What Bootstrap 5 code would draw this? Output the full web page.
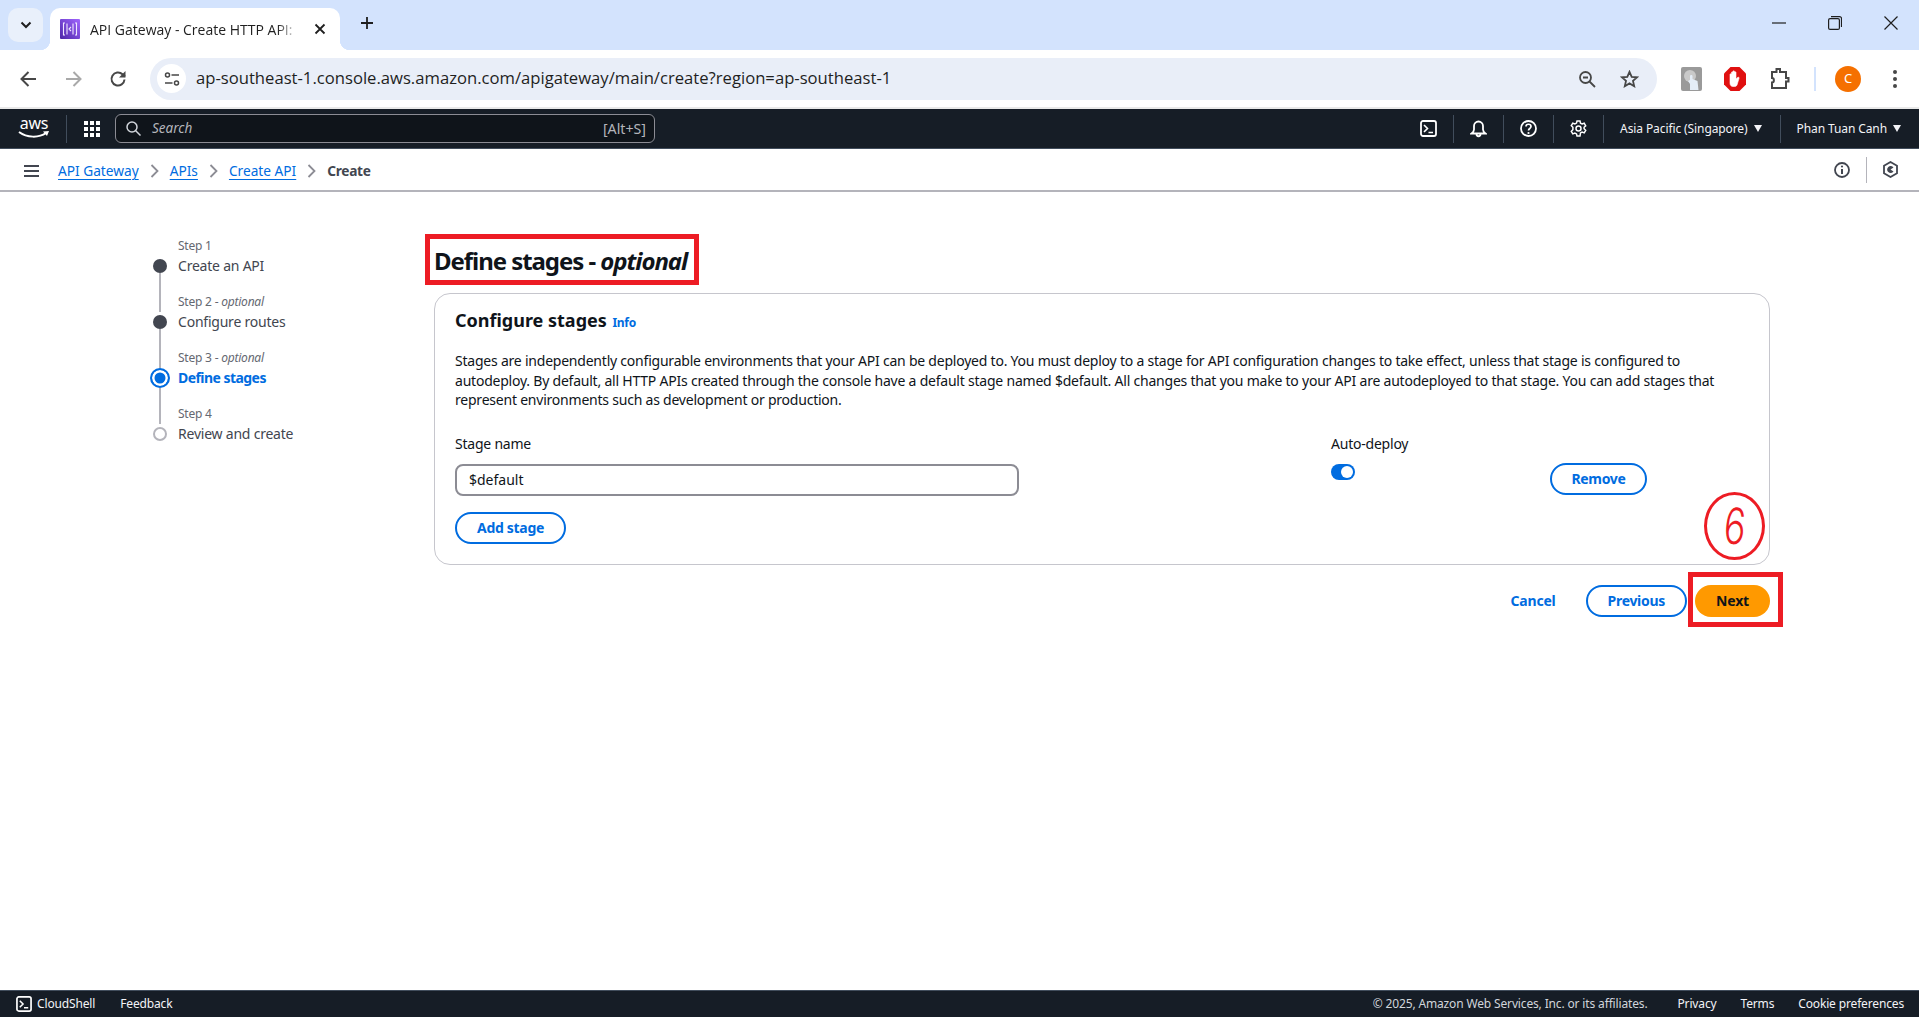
<!DOCTYPE html>
<html lang="en">
<head>
  <meta charset="UTF-8" />
  <meta name="viewport" content="width=device-width, initial-scale=1.0" />
  <title>API Gateway - Create HTTP API</title>
  <link href="https://cdn.jsdelivr.net/npm/bootstrap@5.3.2/dist/css/bootstrap.min.css" rel="stylesheet" />
  <style>
    html, body { height: 100%; }
    body { font-family: "Noto Sans", "Liberation Sans", sans-serif; font-size: 14px; letter-spacing: -.22px; color: #0f141a; background: #fff; overflow: hidden; }
    svg { display: block; flex: none; }

    /* browser chrome */
    .tab-strip { height: 50px; background: #d3e3fd; padding-left: 8px; position: relative; letter-spacing: 0; }
    .tab-list-btn { width: 35px; height: 34px; margin-top: 8px; border-radius: 10px; background: #e9f0fb; }
    .tab-item { width: 290px; height: 42px; margin: 8px 0 0 7px; background: #fff; border-radius: 10px 10px 0 0; padding: 0 14px 0 10px; position: relative; }
    .tab-item::before, .tab-item::after { content: ""; position: absolute; bottom: 0; width: 10px; height: 10px; }
    .tab-item::before { left: -10px; background: radial-gradient(circle at 0 0, #d3e3fd 10px, #fff 10.5px); }
    .tab-item::after { right: -10px; background: radial-gradient(circle at 100% 0, #d3e3fd 10px, #fff 10.5px); }
    .tab-title { width: 208px; margin-left: 10px; font-family: "Open Sans", sans-serif; font-size: 14px; color: #1f1f1f; white-space: nowrap; -webkit-mask-image: linear-gradient(to right, #000 90%, transparent); mask-image: linear-gradient(to right, #000 90%, transparent); }
    .tab-plus { margin-left: 20px; }
    .win-btns { margin-left: auto; padding-right: 21px; gap: 42px; }
    .tool-bar { height: 57px; background: #fff; border-radius: 10px 10px 0 0; padding-left: 19px; letter-spacing: 0; }
    .tool-gap { gap: 26px; }
    .url-bar { width: 1507px; height: 42px; margin-left: 23px; border-radius: 21px; background: #e9eef8; padding: 0 18px 0 7px; }
    .site-btn { width: 29px; height: 29px; border-radius: 50%; background: #fff; }
    .url-text { margin-left: 10px; font-family: "Open Sans", sans-serif; font-size: 16.65px; color: #1f1f1f; white-space: nowrap; }
    .url-end { margin-left: auto; gap: 24px; }
    .ext-icons { margin-left: 24px; }
    .ext-photo { margin-right: 19px; }
    .ext-stop { margin-left: 3px; }
    .puzzle-icon { margin-left: 24px; }
    .ext-sep { width: 2px; height: 24px; background: #d3e3fd; margin: 0 19px 0 24px; }
    .avatar { width: 26px; height: 26px; border-radius: 50%; background: #f57000; color: #fff; font-size: 13px; margin-right: 32px; }
    .chrome-line { height: 2px; background: #e9e9e9; }

    /* aws top nav */
    .aws-nav { height: 40px; background: #161d26; color: #fff; padding-left: 18px; border-bottom: 1px solid #414d5c; letter-spacing: 0; }
    .aws-mark { width: 32px; height: 28px; position: relative; }
    .aws-word { font-size: 16px; line-height: 16px; color: #fff; text-align: center; letter-spacing: -.3px; }
    .aws-smile { margin-top: -1px; }
    .nav-sep { width: 1px; height: 28px; background: #414d5c; }
    .nav-grid { margin: 0 15px 0 17px; }
    .search-box { width: 540px; height: 29px; background: #0f141a; border: 1.5px solid #8c8c94; border-radius: 6px; padding: 0 8px 0 10px; color: #b4b4bb; font-size: 13.5px; }
    .search-word { font-style: italic; margin-left: 11px; }
    .search-key { margin-left: auto; font-size: 14.2px; }
    .nav-right { margin-left: auto; }
    .nav-cell { height: 28px; padding: 0 16px; }
    .nav-cell-wide { padding-right: 18px; }
    .nav-label { font-size: 12px; letter-spacing: -.1px; color: #f3f3f7; white-space: nowrap; }
    .nav-caret { width: 0; height: 0; border-left: 4.5px solid transparent; border-right: 4.5px solid transparent; border-top: 7px solid #f3f3f7; margin-left: 6px; }

    /* breadcrumb bar */
    .crumb-bar { height: 43px; border-bottom: 2px solid #b4b4bb; padding: 3px 21px 0 24px; }
    .crumb-trail { margin-left: 19px; gap: 11px; font-size: 13.7px; letter-spacing: 0; }
    .crumb-trail a { color: #006ce0; text-underline-offset: 3px; }
    .crumb-here { color: #424650; font-weight: 700; letter-spacing: -.3px; }
    .crumb-tools { margin-left: auto; margin-top: -3px; }
    .crumb-sep { width: 1px; height: 26px; background: #b4b4bb; margin: 0 16px; }

    /* main */
    .page-main { padding: 44px 0 0 150px; }
    .step-col { width: 275px; }
    .step-item { display: grid; grid-template-columns: 20px 1fr; column-gap: 8px; grid-template-rows: 20px 36px; }
    .step-rail { display: flex; flex-direction: column; align-items: center; }
    .rail-line { width: 2px; flex: 1; background: #b4b4bb; }
    .step-dot { width: 14px; height: 14px; border-radius: 50%; background: #424650; flex: none; margin-top: 3px; }
    .step-dot.is-now { width: 20px; height: 20px; margin-top: 0; background: #006ce0; border: 2px solid #006ce0; box-shadow: inset 0 0 0 2.5px #fff; }
    .step-dot.is-todo { background: #fff; border: 2px solid #b4b4bb; }
    .step-tag { font-size: 12px; line-height: 20px; color: #656871; }
    .step-name { font-size: 14px; line-height: 20px; color: #424650; }
    .step-name.is-now { color: #006ce0; font-weight: 700; letter-spacing: -.55px; }

    .content-col { width: 1345px; }
    .title-frame { display: inline-block; border: 5px solid #ed1c24; padding: 6px 7px 4px 4px; font-size: 24px; line-height: 31px; font-weight: 700; letter-spacing: -1.05px; margin: -2px 0 8px; }
    .stage-card { margin-left: 9px; border: 1px solid #c6c6cd; border-radius: 16px; padding: 15px 20px 20px; position: relative; }
    .card-heading { font-size: 18px; line-height: 22px; font-weight: 700; letter-spacing: 0; margin: 0; }
    .info-link { font-size: 12px; font-weight: 700; letter-spacing: -.3px; color: #006ce0; margin-left: 1px; text-decoration: none; }
    .card-copy { line-height: 19.6px; margin: 17px 0 24px; }
    .stage-grid { display: grid; grid-template-columns: 876px 219px 97px; }
    .field-label { line-height: 20px; margin-bottom: 10px; }
    .stage-input { width: 564px; height: 32px; border: 2px solid #8c8c94; border-radius: 8px; padding: 0 12px; font-size: 14px; color: #0f141a; }
    .toggle-track { width: 24px; height: 16px; border-radius: 8px; background: #006ce0; padding: 2px; margin-top: 1px; }
    .toggle-knob { width: 12px; height: 12px; border-radius: 50%; background: #fff; margin-left: auto; }
    .pill-btn { height: 32px; padding: 0 20px; border: 2px solid #006ce0; border-radius: 20px; background: #fff; color: #006ce0; font-size: 14px; font-weight: 700; letter-spacing: -.3px; line-height: 1; }
    .remove-cell { margin-top: 29px; }
    .add-btn { margin-top: 16px; }
    .form-actions { margin-top: 20px; gap: 8px; }
    .cancel-link { color: #006ce0; font-weight: 700; letter-spacing: -.2px; text-decoration: none; margin-right: 22px; }
    .next-wrap { position: relative; }
    .next-btn { height: 32px; width: 75px; border: 0; border-radius: 20px; background: #ff9900; color: #0f141a; font-size: 14px; font-weight: 700; letter-spacing: -.2px; }
    .next-wrap::after { content: ""; position: absolute; top: -13px; bottom: -10px; left: -7px; right: -13px; border: 5px solid #ed1c24; pointer-events: none; }
    .mark-six { position: absolute; left: 1269px; top: 198px; width: 61px; height: 68px; border: 3px solid #ed1c24; border-radius: 50%; color: #ed1c24; font-family: "Inter", sans-serif; font-weight: 300; font-size: 50px; line-height: 1; }
    .six-glyph { display: block; transform: scaleX(.72) skewX(-6deg); }

    /* footer */
    .aws-foot { height: 27px; background: #161d26; color: #f3f3f7; font-size: 12px; letter-spacing: -.15px; padding: 0 15px 0 16px; border-top: 1px solid #414d5c; }
    .foot-copy { margin-left: auto; color: #d1d5db; }
    .foot-shell { margin-right: 25px; gap: 5px; }
    .foot-links { gap: 24px; margin-left: 30px; }
  </style>
</head>
<body class="d-flex flex-column">

  <!-- browser tabs -->
  <div class="tab-strip d-flex align-items-start">
    <div class="tab-list-btn d-flex align-items-center justify-content-center">
      <svg width="12" height="8" viewBox="0 0 12 8"><path d="M1.5 1.5 6 6l4.500-4.500" fill="none" stroke="#1f1f1f" stroke-width="2"/></svg>
    </div>
    <div class="tab-item d-flex align-items-center">
      <svg width="20" height="20" viewBox="0 0 20 20"><defs><linearGradient id="favBg" x1="0" y1="1" x2="1" y2="0"><stop offset="0" stop-color="#4d27a8"/><stop offset="1" stop-color="#a166ff"/></linearGradient></defs><rect width="20" height="20" rx="1" fill="url(#favBg)"/><path d="M5 4H3.500v12H5M15 4h1.500v12H15M7 4.500v11M13 4.500v11M11 8l-2 2 2 2" fill="none" stroke="#f0e8ff" stroke-width="1.100"/></svg>
      <div class="tab-title">API Gateway - Create HTTP API:</div>
      <svg class="ms-auto" width="12" height="12" viewBox="0 0 12 12"><path d="M1.500 1.500l9 9M10.500 1.500l-9 9" stroke="#1f1f1f" stroke-width="1.800"/></svg>
    </div>
    <svg class="tab-plus mt-3" width="14" height="14" viewBox="0 0 14 14"><path d="M7 1v12M1 7h12" stroke="#1f1f1f" stroke-width="1.800"/></svg>
    <div class="win-btns d-flex align-items-center mt-3">
      <svg width="14" height="14" viewBox="0 0 14 14"><path d="M0 7h14" stroke="#1f1f1f" stroke-width="1.200"/></svg>
      <svg width="14" height="14" viewBox="0 0 14 14"><rect x=".6" y="2.600" width="10.800" height="10.800" rx="1.500" fill="none" stroke="#1f1f1f" stroke-width="1.200"/><path d="M3 .6h8.500a2 2 0 0 1 2 2V11" fill="none" stroke="#1f1f1f" stroke-width="1.200"/></svg>
      <svg width="14" height="14" viewBox="0 0 14 14"><path d="M.5.500l13 13M13.500.500l-13 13" stroke="#1f1f1f" stroke-width="1.200"/></svg>
    </div>
  </div>

  <!-- browser toolbar -->
  <div class="tool-bar d-flex align-items-center">
    <div class="tool-gap d-flex align-items-center">
      <svg width="19" height="18" viewBox="0 0 19 18"><path d="M17 9H3M9.500 2 2.500 9l7 7" fill="none" stroke="#474747" stroke-width="2"/></svg>
      <svg width="19" height="18" viewBox="0 0 19 18"><path d="M2 9h14M9.500 2l7 7-7 7" fill="none" stroke="#a9a9a9" stroke-width="2"/></svg>
      <svg width="18" height="18" viewBox="0 0 18 18"><path d="M15.500 9.500a6.500 6.500 0 1 1-2-5.200L16 6.500" fill="none" stroke="#474747" stroke-width="2"/><path d="M16.500 1v6.500H10z" fill="#474747"/></svg>
    </div>
    <div class="url-bar d-flex align-items-center">
      <div class="site-btn d-flex align-items-center justify-content-center">
        <svg width="16" height="16" viewBox="0 0 16 16"><circle cx="3.500" cy="4" r="2" fill="none" stroke="#474747" stroke-width="1.500"/><path d="M7.500 4H15M1 12h7.500" stroke="#474747" stroke-width="1.500"/><circle cx="12.500" cy="12" r="2" fill="none" stroke="#474747" stroke-width="1.500"/></svg>
      </div>
      <div class="url-text">ap-southeast-1.console.aws.amazon.com/apigateway/main/create?region=ap-southeast-1</div>
      <div class="url-end d-flex align-items-center">
        <svg width="18" height="18" viewBox="0 0 18 18"><circle cx="7.500" cy="7.500" r="5.500" fill="none" stroke="#474747" stroke-width="1.800"/><path d="M5 7.500h5M11.500 11.500 17 17" stroke="#474747" stroke-width="1.800"/></svg>
        <svg width="19" height="18" viewBox="0 0 19 18"><path d="m9.500 1.800 2.200 5 5.400.5-4.100 3.600 1.200 5.300-4.700-2.800-4.700 2.800 1.200-5.300L1.900 7.300l5.400-.5z" fill="none" stroke="#474747" stroke-width="1.800"/></svg>
      </div>
    </div>
    <div class="ext-icons d-flex align-items-center">
      <svg class="ext-photo" width="21" height="24" viewBox="0 0 21 24"><rect width="21" height="24" rx="2" fill="#9a9a9a"/><circle cx="9" cy="9" r="6" fill="#c9c9c9"/><path d="M9 23v-6L7 14l2-1V9c0-1.500 2.500-1.500 2.500 0v3l5 2 1 9z" fill="#e4edf7"/></svg>
      <svg class="ext-stop" width="22" height="24" viewBox="0 0 22 24"><path d="M6.500 0h9L22 6.500v11L15.500 24h-9L0 17.500v-11z" fill="#e01010"/><path d="M6 13V7.500c0-1 1.500-1 1.500 0V11V5.500c0-1 1.500-1 1.500 0V11V4.500c0-1 1.500-1 1.500 0V11V5.500c0-1 1.500-1 1.500 0V12l1.500-1.500c1-.8 2 0 1.500 1L13 18c-.500 1-1.500 1.500-2.500 1.500H9C7 19.500 6 18 6 16z" fill="#fff" stroke="#fff" stroke-width=".6"/></svg>
      <svg class="puzzle-icon" width="20" height="23" viewBox="0 0 20 23"><path d="M2 5h4.500V2h3.500v3H16v6h2.500v3.500H16V21H2v-5.500c2.500 0 2.500-4.500 0-4.500z" fill="none" stroke="#474747" stroke-width="2"/></svg>
    </div>
    <div class="ext-sep"></div>
    <div class="avatar d-flex align-items-center justify-content-center">C</div>
    <svg width="4" height="20" viewBox="0 0 4 20"><circle cx="2" cy="3" r="2" fill="#474747"/><circle cx="2" cy="10" r="2" fill="#474747"/><circle cx="2" cy="17" r="2" fill="#474747"/></svg>
  </div>
  <div class="chrome-line"></div>

  <!-- aws console header -->
  <div class="aws-nav d-flex align-items-center">
    <div class="aws-mark">
      <div class="aws-word">aws</div>
      <svg class="aws-smile" width="32" height="10" viewBox="0 0 32 10"><path d="M1 2c8 6 20 6 27 1" fill="none" stroke="#fff" stroke-width="2"/><path d="M25 1.500 31 1l-2 5z" fill="#fff"/></svg>
    </div>
    <div class="nav-sep ms-3"></div>
    <svg class="nav-grid" width="16" height="16" viewBox="0 0 16 16" fill="#fff"><rect width="4" height="4"/><rect x="6" width="4" height="4"/><rect x="12" width="4" height="4"/><rect y="6" width="4" height="4"/><rect x="6" y="6" width="4" height="4"/><rect x="12" y="6" width="4" height="4"/><rect y="12" width="4" height="4"/><rect x="6" y="12" width="4" height="4"/><rect x="12" y="12" width="4" height="4"/></svg>
    <div class="search-box d-flex align-items-center">
      <svg width="15" height="15" viewBox="0 0 15 15"><circle cx="6" cy="6" r="5" fill="none" stroke="#d1d5db" stroke-width="1.500"/><path d="m9.500 9.500 5 5" stroke="#d1d5db" stroke-width="1.500"/></svg>
      <span class="search-word">Search</span>
      <span class="search-key">[Alt+S]</span>
    </div>
    <div class="nav-right d-flex align-items-center">
      <div class="nav-cell d-flex align-items-center">
        <svg width="17" height="17" viewBox="0 0 17 17"><rect x="1" y="1" width="15" height="15" rx="2" fill="none" stroke="#fff" stroke-width="1.800"/><path d="m4 5 3.500 3.500L4 12M8.500 12.500H13" fill="none" stroke="#fff" stroke-width="1.600"/></svg>
      </div>
      <div class="nav-sep"></div>
      <div class="nav-cell d-flex align-items-center">
        <svg width="17" height="18" viewBox="0 0 17 18"><path d="M8.500 1.500a4.500 4.500 0 0 0-4.500 4.500v3.500c0 2-1 3-2.500 4h14c-1.500-1-2.500-2-2.500-4V6a4.500 4.500 0 0 0-4.500-4.500zM6.500 14c0 3 4 3 4 0" fill="none" stroke="#fff" stroke-width="1.800"/></svg>
      </div>
      <div class="nav-sep"></div>
      <div class="nav-cell d-flex align-items-center">
        <svg width="17" height="17" viewBox="0 0 17 17"><circle cx="8.500" cy="8.500" r="7.500" fill="none" stroke="#fff" stroke-width="1.800"/><path d="M6 6.500C6 3.500 11 3.500 11 6.500c0 2-2.500 2-2.500 4" fill="none" stroke="#fff" stroke-width="1.700"/><circle cx="8.500" cy="13" r="1.100" fill="#fff"/></svg>
      </div>
      <div class="nav-sep"></div>
      <div class="nav-cell d-flex align-items-center">
        <svg width="17" height="17" viewBox="0 0 17 17"><circle cx="8.500" cy="8.500" r="2.500" fill="none" stroke="#fff" stroke-width="1.500"/><path d="M7 1h3l.5 2.200 1.600.8 2.100-.8 1.500 2.600-1.600 1.500v1.500l1.600 1.500-1.500 2.600-2.100-.8-1.600.8L10 16H7l-.5-2.100-1.600-.8-2.100.8L1.300 11.300l1.600-1.500V7.200L1.300 5.700l1.500-2.600 2.100.8 1.600-.8z" fill="none" stroke="#fff" stroke-width="1.500"/></svg>
      </div>
      <div class="nav-sep"></div>
      <div class="nav-cell nav-cell-wide d-flex align-items-center">
        <span class="nav-label">Asia Pacific (Singapore)</span><span class="nav-caret"></span>
      </div>
      <div class="nav-sep"></div>
      <div class="nav-cell nav-cell-wide d-flex align-items-center">
        <span class="nav-label">Phan Tuan Canh</span><span class="nav-caret"></span>
      </div>
    </div>
  </div>

  <!-- breadcrumbs -->
  <div class="crumb-bar d-flex align-items-center">
    <svg width="15" height="12" viewBox="0 0 15 12"><path d="M0 1h15M0 6h15M0 11h15" stroke="#424650" stroke-width="2"/></svg>
    <div class="crumb-trail d-flex align-items-center">
      <a href="#">API Gateway</a>
      <svg width="9" height="14" viewBox="0 0 9 14"><path d="m1.500 1 6 6-6 6" fill="none" stroke="#8c8c94" stroke-width="1.800"/></svg>
      <a href="#">APIs</a>
      <svg width="9" height="14" viewBox="0 0 9 14"><path d="m1.500 1 6 6-6 6" fill="none" stroke="#8c8c94" stroke-width="1.800"/></svg>
      <a href="#">Create API</a>
      <svg width="9" height="14" viewBox="0 0 9 14"><path d="m1.500 1 6 6-6 6" fill="none" stroke="#8c8c94" stroke-width="1.800"/></svg>
      <span class="crumb-here">Create</span>
    </div>
    <div class="crumb-tools d-flex align-items-center">
      <svg width="16" height="16" viewBox="0 0 16 16"><circle cx="8" cy="8" r="7" fill="none" stroke="#424650" stroke-width="1.800"/><path d="M8 7v5" stroke="#424650" stroke-width="2"/><circle cx="8" cy="4.500" r="1.100" fill="#424650"/></svg>
      <div class="crumb-sep"></div>
      <svg width="15" height="17" viewBox="0 0 15 17"><path d="M7.500 1 14 4.700v7.600L7.500 16 1 12.300V4.700z" fill="none" stroke="#424650" stroke-width="1.800"/><path d="M10.500 6.500A3.500 3.500 0 1 0 10.500 10.500L7.500 8.500z" fill="#424650"/></svg>
    </div>
  </div>

  <!-- page content -->
  <main class="page-main d-flex flex-grow-1">
    <div class="step-col">
      <div class="step-item">
        <div class="step-rail"></div>
        <div class="step-tag">Step 1</div>
        <div class="step-rail"><span class="step-dot"></span><span class="rail-line"></span></div>
        <div class="step-name">Create an API</div>
      </div>
      <div class="step-item">
        <div class="step-rail"><span class="rail-line"></span></div>
        <div class="step-tag">Step 2 - <em>optional</em></div>
        <div class="step-rail"><span class="step-dot"></span><span class="rail-line"></span></div>
        <div class="step-name">Configure routes</div>
      </div>
      <div class="step-item">
        <div class="step-rail"><span class="rail-line"></span></div>
        <div class="step-tag">Step 3 - <em>optional</em></div>
        <div class="step-rail"><span class="step-dot is-now"></span><span class="rail-line"></span></div>
        <div class="step-name is-now">Define stages</div>
      </div>
      <div class="step-item">
        <div class="step-rail"><span class="rail-line"></span></div>
        <div class="step-tag">Step 4</div>
        <div class="step-rail"><span class="step-dot is-todo"></span></div>
        <div class="step-name">Review and create</div>
      </div>
    </div>

    <div class="content-col">
      <h1 class="title-frame">Define stages - <em>optional</em></h1>
      <section class="stage-card">
        <h2 class="card-heading">Configure stages <a class="info-link" href="#">Info</a></h2>
        <p class="card-copy">Stages are independently configurable environments that your API can be deployed to. You must deploy to a stage for API configuration changes to take effect, unless that stage is configured to autodeploy. By default, all HTTP APIs created through the console have a default stage named $default. All changes that you make to your API are autodeployed to that stage. You can add stages that represent environments such as development or production.</p>
        <div class="stage-grid">
          <div>
            <div class="field-label">Stage name</div>
            <input class="stage-input" type="text" value="$default" />
          </div>
          <div>
            <div class="field-label">Auto-deploy</div>
            <div class="toggle-track d-flex"><span class="toggle-knob"></span></div>
          </div>
          <div class="remove-cell"><button class="pill-btn w-100 px-0" type="button">Remove</button></div>
        </div>
        <button class="pill-btn add-btn" type="button">Add stage</button>
        <div class="mark-six d-flex align-items-center justify-content-center"><span class="six-glyph">6</span></div>
      </section>
      <div class="form-actions d-flex align-items-center justify-content-end">
        <a class="cancel-link" href="#">Cancel</a>
        <button class="pill-btn" type="button">Previous</button>
        <div class="next-wrap"><button class="next-btn" type="button">Next</button></div>
      </div>
    </div>
  </main>

  <!-- console footer -->
  <footer class="aws-foot d-flex align-items-center">
    <div class="foot-shell d-flex align-items-center">
      <svg width="16" height="16" viewBox="0 0 17 17"><rect x="1" y="1" width="15" height="15" rx="2" fill="none" stroke="#fff" stroke-width="1.800"/><path d="m4 5 3.500 3.500L4 12M8.500 12.500H13" fill="none" stroke="#fff" stroke-width="1.600"/></svg>
      <span>CloudShell</span>
    </div>
    <span>Feedback</span>
    <span class="foot-copy">© 2025, Amazon Web Services, Inc. or its affiliates.</span>
    <div class="foot-links d-flex">
      <span>Privacy</span>
      <span>Terms</span>
      <span>Cookie preferences</span>
    </div>
  </footer>

  <script src="https://cdn.jsdelivr.net/npm/bootstrap@5.3.2/dist/js/bootstrap.bundle.min.js"></script>
</body>
</html>
